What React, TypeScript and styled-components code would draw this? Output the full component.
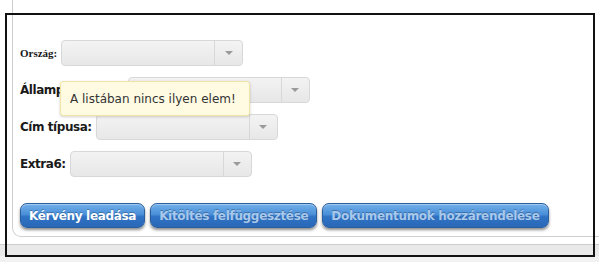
import React from "react";
import styled, { createGlobalStyle } from "styled-components";

//== Styling ==//
const GlobalStyle = createGlobalStyle`
  html, body {
    margin: 0;
    padding: 0;
    background: #ffffff;
  }
`;

const Page = styled.div`
  position: relative;
  width: 599px;
  height: 262px;
  overflow: hidden;
  display: flex;
  flex-direction: column;
  background: #ffffff;
  font-family: "DejaVu Sans", Verdana, sans-serif;
`;

const Panel = styled.div`
  box-sizing: border-box;
  width: 620px;
  height: 237px;
  margin-left: 12px;
  padding: 40px 0 0 7px;
  border: 1px solid #cfcfcf;
  border-top: none;
  border-bottom-left-radius: 9px;
  display: flex;
  flex-direction: column;
`;

const Form = styled.div`
  display: flex;
  flex-direction: column;
  gap: 11px;
`;

const Row = styled.div`
  display: flex;
  align-items: center;
  gap: 4px;
  height: 26px;
`;

const Label = styled.span<{ $serif?: boolean }>`
  font-family: ${(p) =>
    p.$serif ? '"Liberation Serif", "Times New Roman", serif' : '"DejaVu Sans", Verdana, sans-serif'};
  font-size: ${(p) => (p.$serif ? "11px" : "12px")};
  letter-spacing: ${(p) => (p.$serif ? "0" : "-0.45px")};
  font-weight: bold;
  color: #1a1a1a;
  white-space: nowrap;
`;

const Select = styled.div`
  box-sizing: border-box;
  width: 182px;
  height: 26px;
  display: flex;
  border: 1px solid #d8d8d8;
  border-radius: 4px;
  background: linear-gradient(#f3f3f3, #e7e7e7);
`;

const SelectValue = styled.div`
  flex: 1;
`;

const SelectArrow = styled.div`
  width: 27px;
  border-left: 1px solid #d8d8d8;
  display: flex;
  align-items: center;
  justify-content: center;

  &::after {
    content: "";
    border-left: 4px solid transparent;
    border-right: 4px solid transparent;
    border-top: 4px solid #9a9a9a;
  }
`;

const ButtonBar = styled.div`
  display: flex;
  gap: 5px;
  margin-top: 26px;
`;

const Button = styled.button<{ $disabled?: boolean }>`
  box-sizing: border-box;
  height: 25px;
  padding: 0 8px;
  border: 1px solid #2b5e9c;
  border-radius: 7px;
  background: linear-gradient(#72b0ea 0%, #4a8fd8 45%, #2f72c4 55%, #2a68b8 100%);
  box-shadow: 0 2px 3px rgba(0, 0, 0, 0.45), inset 0 1px 0 rgba(255, 255, 255, 0.35);
  font-family: "DejaVu Sans", Verdana, sans-serif;
  font-size: 12px;
  font-weight: bold;
  letter-spacing: -0.32px;
  color: ${(p) => (p.$disabled ? "#a9c9ec" : "#ffffff")};
  text-shadow: 0 -1px 0 rgba(0, 0, 0, 0.25);
  white-space: nowrap;
`;

const Gap = styled.div`
  height: 7px;
`;

const StatusBar = styled.div`
  flex: 1;
  border-top: 1px solid #cdcdcd;
  background: linear-gradient(#e9e9e9 0 11px, #f1f1f1 11px);
`;

const Frame = styled.div`
  position: absolute;
  left: 5px;
  top: 13px;
  width: 590px;
  height: 244px;
  box-sizing: border-box;
  border: 2px solid #111111;
  pointer-events: none;
`;

const Tooltip = styled.div`
  position: absolute;
  left: 60px;
  top: 81px;
  box-sizing: border-box;
  width: 190px;
  height: 35px;
  display: flex;
  align-items: center;
  padding-left: 9px;
  background: #fffbe3;
  border: 1px solid #f2e4a4;
  border-radius: 3px;
  box-shadow: 0 1px 3px rgba(0, 0, 0, 0.18);
  font-family: "DejaVu Sans", Verdana, sans-serif;
  font-size: 12px;
  color: #333333;
  white-space: nowrap;
`;

//== Component ==//
const fields = [
  { label: "Ország:", serif: true },
  { label: "Állampolgárság:" },
  { label: "Cím típusa:" },
  { label: "Extra6:" },
];

const App: React.FC = () => {
  return (
    <>
      <GlobalStyle />
      <Page>
        <Panel>
          <Form>
            {fields.map((f) => (
              <Row key={f.label}>
                <Label $serif={f.serif}>{f.label}</Label>
                <Select>
                  <SelectValue />
                  <SelectArrow />
                </Select>
              </Row>
            ))}
          </Form>
          <ButtonBar>
            <Button>Kérvény leadása</Button>
            <Button $disabled>Kitöltés felfüggesztése</Button>
            <Button $disabled>Dokumentumok hozzárendelése</Button>
          </ButtonBar>
        </Panel>
        <Gap />
        <StatusBar />
        <Frame />
        <Tooltip>A listában nincs ilyen elem!</Tooltip>
      </Page>
    </>
  );
};

export default App;
